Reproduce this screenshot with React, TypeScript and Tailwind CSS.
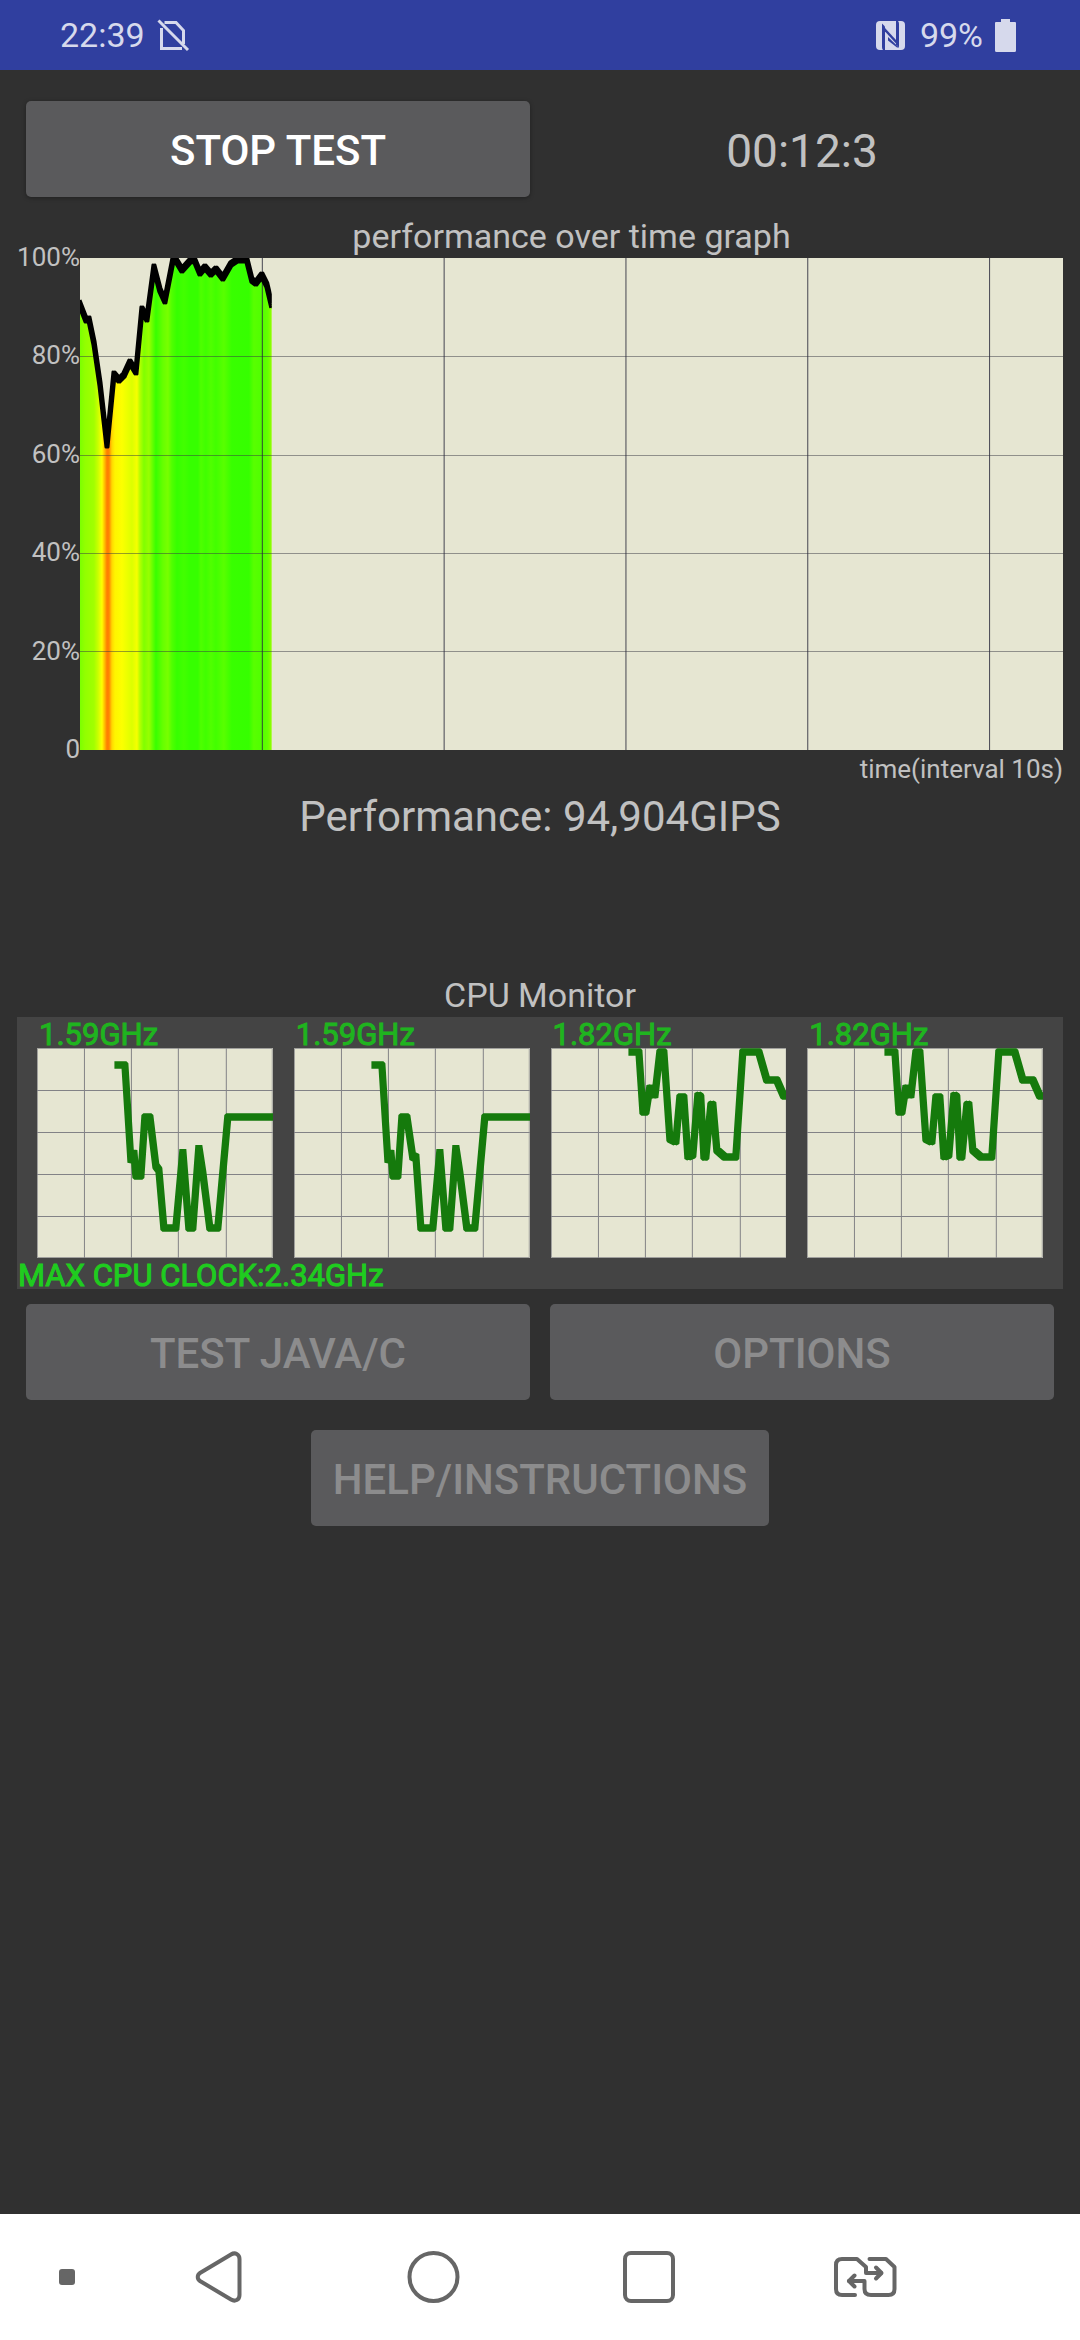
import React from "react";

type Point = [number, number];

const PERFORMANCE: Point[] = [
  [-1, 44], [6, 62], [9, 61], [14, 85], [20, 126], [27, 187], [34, 116], [39, 122],
  [44, 117], [50, 104], [56, 114], [62, 51], [67, 61], [74, 9], [80, 32], [85, 43],
  [93, 2], [96, 2], [102, 12], [111, 2], [115, 3], [120, 15], [125, 9], [131, 16],
  [136, 11], [143, 20], [151, 6], [157, 2], [167, 2], [172, 22], [176, 25], [182, 17],
  [187, 27], [192, 48],
];

const HEAT: [number, string][] = [
  [0, "#7cff00"], [5, "#92ff00"], [14, "#a2ff00"], [18, "#caff00"], [22, "#ffff00"],
  [25, "#ffb400"], [27, "#ff7e00"], [29, "#ff8400"], [32, "#ffd800"], [35, "#fff400"],
  [42, "#fcff00"], [52, "#dcff00"], [57, "#f6ff00"], [60, "#b4ff00"], [64, "#80ff00"],
  [69, "#98ff00"], [73, "#60ff00"], [76, "#38ff00"], [83, "#66ff00"], [88, "#78ff00"],
  [92, "#50ff00"], [97, "#36ff00"], [104, "#42ff00"], [110, "#36ff00"], [118, "#36ff00"],
  [121, "#4eff00"], [126, "#40ff00"], [131, "#50ff00"], [136, "#42ff00"], [144, "#58ff00"],
  [152, "#38ff00"], [169, "#36ff00"], [174, "#58ff00"], [182, "#50ff00"], [188, "#66ff00"],
  [192, "#94ff00"],
];

const CORE_A: Point[] = [
  [79, 17], [88, 17], [94, 113], [97, 104], [99, 128], [104, 128], [108, 69], [113, 69],
  [119, 118], [122, 122], [127, 180], [139, 180], [146, 103], [152, 180], [156, 180],
  [162, 99], [166, 125], [173, 180], [181, 180], [191, 69], [239, 69],
];

const CORE_B: Point[] = [
  [79, 17], [88, 17], [94, 113], [97, 104], [99, 128], [104, 128], [108, 69], [113, 69],
  [119, 110], [122, 108], [127, 180], [139, 180], [146, 103], [152, 180], [156, 180],
  [162, 99], [166, 125], [173, 180], [181, 180], [191, 69], [239, 69],
];

const CORE_C: Point[] = [
  [79, 4], [88, 4], [92, 64], [95, 64], [99, 39], [104, 48], [109, 4], [113, 4],
  [119, 91], [125, 94], [129, 49], [133, 49], [137, 109], [142, 107], [147, 47], [150, 49],
  [153, 109], [155, 109], [160, 57], [162, 56], [166, 102], [174, 109], [185, 109], [192, 4],
  [208, 4], [216, 32], [226, 32], [233, 48], [239, 48],
];

const CORES = [
  { clock: "1.59GHz", points: CORE_A },
  { clock: "1.59GHz", points: CORE_B },
  { clock: "1.82GHz", points: CORE_C },
  { clock: "1.82GHz", points: CORE_C },
];

const toPath = (points: Point[], dx = 0, dy = 0) =>
  points.map(([x, y], i) => `${i ? "L" : "M"}${x + dx} ${y + dy}`).join(" ");

// rectangular pen: taller than it is wide, so level runs come out thicker than steep ones
const penPath = (points: Point[], w: number, h: number) =>
  [[-w, -h], [w, -h], [-w, 0], [w, 0], [-w, h], [w, h]].map(([dx, dy]) => toPath(points, dx, dy)).join(" ");

function PerformanceChart() {
  return (
    <svg
      viewBox="0 0 984 492"
      preserveAspectRatio="none"
      className="block h-[492px] w-full bg-[#e6e6d2]"
      role="img"
      aria-label="performance over time graph"
    >
      <defs>
        <linearGradient id="heat" gradientUnits="userSpaceOnUse" x1="0" y1="0" x2="192" y2="0">
          {HEAT.map(([x, color]) => (
            <stop key={x} offset={x / 192} stopColor={color} />
          ))}
        </linearGradient>
        <clipPath id="recorded">
          <rect width="192" height="492" />
        </clipPath>
      </defs>
      <g clipPath="url(#recorded)">
        <path d={`${toPath(PERFORMANCE)} V492 H-1 Z`} fill="url(#heat)" />
      </g>
      {[98, 197, 295, 393].map((y) => (
        <rect key={y} y={y} width="984" height="1" fill="#3a3a44" opacity="0.5" />
      ))}
      {[182, 364, 546, 728, 910].map((x) => (
        <rect key={x} x={x} width="1" height="492" fill="#2a2a3c" opacity="0.85" />
      ))}
      <g clipPath="url(#recorded)">
        <path
          d={penPath(PERFORMANCE, 1, 2)}
          fill="none"
          stroke="#000"
          strokeWidth="3"
          strokeLinejoin="round"
        />
      </g>
    </svg>
  );
}

function CoreChart({ clock, points }: { clock: string; points: Point[] }) {
  return (
    <div>
      <div className="pl-[2px] text-[31px] leading-[26px] text-[#1fb41f] [-webkit-text-stroke:1px]">{clock}</div>
      <svg
        viewBox="0 0 236 210"
        preserveAspectRatio="none"
        className="block h-[210px] w-full bg-[#e6e6d2]"
        role="img"
        aria-label={`core clock ${clock}`}
      >
        <g fill="none" stroke="#828286" strokeWidth="1">
          <rect x="0.5" y="0.5" width="235" height="209" opacity="0.7" />
          {[47.5, 94.5, 141.5, 189.5].map((x) => (
            <path key={x} d={`M${x} 0V210`} />
          ))}
          {[42.5, 84.5, 126.5, 168.5].map((y) => (
            <path key={y} d={`M0 ${y}H236`} />
          ))}
        </g>
        <path
          d={penPath(points, 1.5, 1.75)}
          fill="none"
          stroke="#157a0c"
          strokeWidth="4"
          strokeLinejoin="bevel"
        />
      </svg>
    </div>
  );
}

function StatusBar() {
  return (
    <header className="flex h-[70px] items-center justify-between bg-[#303f9f] pl-[60px] pr-[64px] text-[34px] leading-[40px] text-[#d6d9ec]">
      <div className="flex items-center gap-3">
        <span>22:39</span>
        <svg width="36" height="36" viewBox="0 0 36 36" fill="none" stroke="currentColor" strokeWidth="3">
          <path d="M4.5 11V31.5H25" />
          <path d="M7.5 5.5H19L26.5 13.5V27" />
          <path d="M1.5 3.5L31 33" />
        </svg>
      </div>
      <div className="flex items-center">
        <svg width="29" height="29" viewBox="0 0 29 29" className="mr-[15px]">
          <rect width="29" height="29" rx="4" fill="currentColor" />
          <g fill="#303f9f">
            <path d="M6 2.5L9 5.5V29H7Q6 28 6 26Z" />
            <path d="M23 26.5L20 23.5V0H22Q23 1 23 3Z" />
            <path d="M9 7L20 19V22.5L9 10.5Z" />
            <path d="M12 16L23 26.5H21L12 19.5Z" />
          </g>
        </svg>
        <span className="mr-3">99%</span>
        <svg width="21" height="33" viewBox="0 0 21 33" fill="currentColor">
          <path d="M6 0H15V3H20Q21 3 21 4V31.5Q21 33 19.5 33H1.5Q0 33 0 31.5V4Q0 3 1 3H6Z" />
        </svg>
      </div>
    </header>
  );
}

function NavBar() {
  return (
    <nav className="mt-auto grid h-[126px] grid-cols-[1fr_2fr_2fr_2fr_2fr_1fr] items-center justify-items-center bg-white text-[#666]">
      <button type="button" aria-label="Hide bar" className="justify-self-end pr-[33px]">
        <span className="block size-4 rounded-[3px] bg-current" />
      </button>
      <button type="button" aria-label="Back">
        <svg width="64" height="64" viewBox="0 0 64 64" fill="none" stroke="currentColor" strokeWidth="4">
          <path d="M55.5 14C55.5 9 51 7 47 9.5L16 28C13 30 13 34 16 36L47 54.5C51 57 55.5 55 55.5 50Z" />
        </svg>
      </button>
      <button type="button" aria-label="Home">
        <svg width="64" height="64" viewBox="0 0 64 64" fill="none" stroke="currentColor" strokeWidth="4">
          <circle cx="33.5" cy="32" r="24" />
        </svg>
      </button>
      <button type="button" aria-label="Recent apps">
        <svg width="64" height="64" viewBox="0 0 64 64" fill="none" stroke="currentColor" strokeWidth="4">
          <rect x="9" y="8" width="48" height="48" rx="6" />
        </svg>
      </button>
      <button type="button" aria-label="Switch SIM">
        <svg
          width="66"
          height="40"
          viewBox="-3 0 66 40"
          fill="none"
          stroke="currentColor"
          strokeWidth="4"
          strokeLinecap="round"
          strokeLinejoin="round"
        >
          <path d="M21 38H8Q2 38 2 32V8Q2 2 8 2H23L32 10V16H47" />
          <path d="M42 10.5L47.5 16L42 21.5" />
          <path d="M35.5 2H52L60.5 10V32Q60.5 38 54.5 38H37Q30.5 38 30.5 32V24H15" />
          <path d="M20.5 18.5L15 24L20.5 29.5" />
        </svg>
      </button>
    </nav>
  );
}

export default function App() {
  const button =
    "h-24 rounded-[5px] bg-[#5a5a5c] pt-[3px] text-[42px] leading-[50px] font-medium text-white uppercase disabled:text-[#8c8c8d]";

  return (
    <div className="flex min-h-screen flex-col bg-[#303030] font-[Roboto,sans-serif] text-[#c1c1c1]">
      <StatusBar />

      <main className="px-[17px] pt-[31px]">
        <div className="grid grid-cols-2 items-center gap-5 px-[9px]">
          <button type="button" className={`${button} shadow-[0_1px_4px_rgba(0,0,0,0.35)]`}>
            Stop test
          </button>
          <div className="pt-[3px] text-center text-[46px] leading-[56px]">00:12:3</div>
        </div>

        <section className="mt-[19px] flex">
          <div className="flex w-[63px] flex-col justify-between pt-[26px] pb-6 text-[26px] leading-[30px]">
            {["100%", "80%", "60%", "40%", "20%", "0"].map((label) => (
              <div key={label} className="flex justify-end">
                {label}
              </div>
            ))}
          </div>
          <div className="flex-1">
            <h2 className="mb-[2px] text-center text-[34px] leading-[40px]">performance over time graph</h2>
            <PerformanceChart />
            <div className="text-right text-[26px] leading-[38px]">time(interval 10s)</div>
          </div>
        </section>
        <p className="mt-1 text-center text-[42px] leading-[50px]">Performance: 94,904GIPS</p>

        <h2 className="mt-[133px] text-center text-[34px] leading-[40px]">CPU Monitor</h2>
        <section className="mt-[2px] bg-[#444] pt-[5px]">
          <div className="grid grid-cols-4 gap-[21px] px-5">
            {CORES.map((core, i) => (
              <CoreChart key={i} clock={core.clock} points={core.points} />
            ))}
          </div>
          <div className="mt-[5px] pl-px text-[31px] leading-[26px] text-[#1fcc1f] [-webkit-text-stroke:1px]">
            MAX CPU CLOCK:2.34GHz
          </div>
        </section>

        <div className="mt-[15px] grid grid-cols-2 gap-5 px-[9px]">
          <button type="button" disabled className={button}>
            Test Java/C
          </button>
          <button type="button" disabled className={button}>
            Options
          </button>
        </div>
        <div className="mt-[30px] flex justify-center">
          <button type="button" disabled className={`${button} px-[22px]`}>
            Help/Instructions
          </button>
        </div>
      </main>

      <NavBar />
    </div>
  );
}
